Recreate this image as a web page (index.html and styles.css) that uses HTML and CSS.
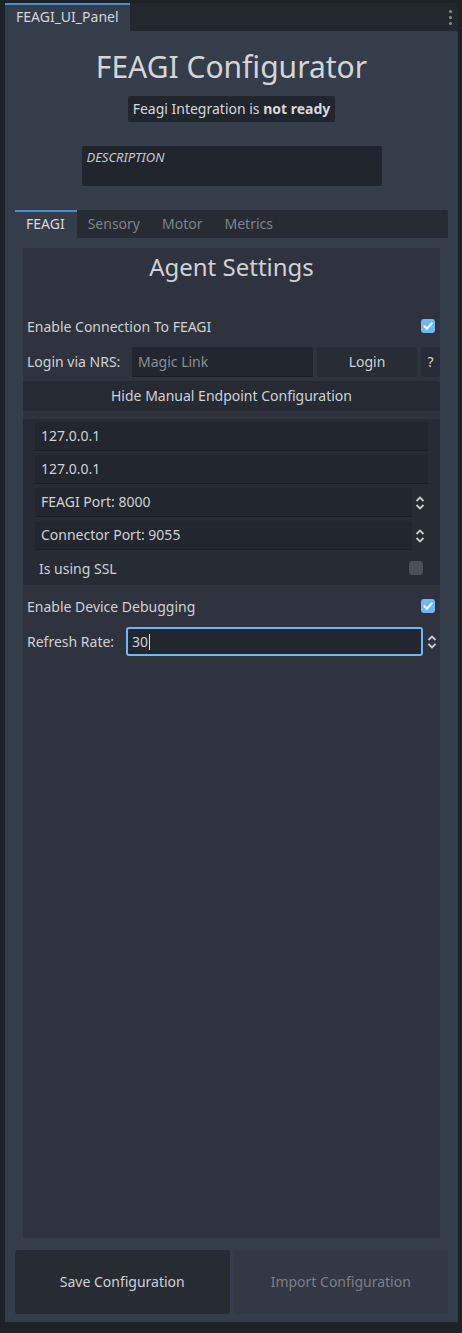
FILE: index.html
```html
<!DOCTYPE html>
<html>
<head>
<meta charset="utf-8">
<link rel="stylesheet" href="styles.css">
</head>
<body>
<div class="dock">
  <div class="dock-tabs">
    <div class="dock-tab">FEAGI_UI_Panel</div>
    <div class="dock-menu"><span></span><span></span><span></span></div>
  </div>
  <div class="dock-body">
    <h1 class="title">FEAGI Configurator</h1>
    <div class="status">Feagi Integration is <b>not ready</b></div>
    <div class="description">DESCRIPTION</div>
    <div class="tabs">
      <div class="tab active">FEAGI</div>
      <div class="tab">Sensory</div>
      <div class="tab">Motor</div>
      <div class="tab">Metrics</div>
    </div>
    <div class="tab-page">
      <div class="content">
        <div class="heading">Agent Settings</div>
        <div class="check-row enable-row">
          <span>Enable Connection To FEAGI</span>
          <svg class="check" width="14" height="14" viewBox="0 0 14 14"><rect width="14" height="14" rx="3" fill="#6fb7f8"/><polyline points="3.5,7.2 6,9.7 10.8,4.3" fill="none" stroke="#ffffff" stroke-width="2" stroke-linecap="round" stroke-linejoin="round"/></svg>
        </div>
        <div class="login-row">
          <span class="label">Login via NRS:</span>
          <div class="field placeholder login-field">Magic Link</div>
          <div class="btn login-btn">Login</div>
          <div class="btn help-btn">?</div>
        </div>
        <div class="btn wide-btn">Hide Manual Endpoint Configuration</div>
        <div class="endpoint">
          <div class="field">127.0.0.1</div>
          <div class="field">127.0.0.1</div>
          <div class="spin">
            <div class="field">FEAGI Port: 8000</div>
            <svg class="arrows" width="10" height="16" viewBox="0 0 10 16"><polyline points="1.5,6 5,2.5 8.5,6" fill="none" stroke="#c9ccd1" stroke-width="1.8"/><polyline points="1.5,10 5,13.5 8.5,10" fill="none" stroke="#c9ccd1" stroke-width="1.8"/></svg>
          </div>
          <div class="spin">
            <div class="field">Connector Port: 9055</div>
            <svg class="arrows" width="10" height="16" viewBox="0 0 10 16"><polyline points="1.5,6 5,2.5 8.5,6" fill="none" stroke="#c9ccd1" stroke-width="1.8"/><polyline points="1.5,10 5,13.5 8.5,10" fill="none" stroke="#c9ccd1" stroke-width="1.8"/></svg>
          </div>
          <div class="check-row ssl-row">
            <span>Is using SSL</span>
            <span class="check off"></span>
          </div>
        </div>
        <div class="check-row debug-row">
          <span>Enable Device Debugging</span>
          <svg class="check" width="14" height="14" viewBox="0 0 14 14"><rect width="14" height="14" rx="3" fill="#6fb7f8"/><polyline points="3.5,7.2 6,9.7 10.8,4.3" fill="none" stroke="#ffffff" stroke-width="2" stroke-linecap="round" stroke-linejoin="round"/></svg>
        </div>
        <div class="refresh-row">
          <span class="label">Refresh Rate:</span>
          <div class="focus-field">30<span class="caret"></span></div>
          <svg class="arrows" width="10" height="16" viewBox="0 0 10 16"><polyline points="1.5,6 5,2.5 8.5,6" fill="none" stroke="#c9ccd1" stroke-width="1.8"/><polyline points="1.5,10 5,13.5 8.5,10" fill="none" stroke="#c9ccd1" stroke-width="1.8"/></svg>
        </div>
      </div>
    </div>
    <div class="actions">
      <div class="btn action">Save Configuration</div>
      <div class="btn action disabled">Import Configuration</div>
    </div>
  </div>
</div>
</body>
</html>
```

FILE: styles.css
```css
html, body {
  margin: 0;
  padding: 0;
  background: #1d2128;
  height: 100%;
}
body {
  font-family: "Noto Sans", "DejaVu Sans", sans-serif;
  font-size: 14px;
  color: #cfd2d6;
}
.dock {
  margin: 3px 4px 0 5px;
  height: 1319px;
  display: flex;
  flex-direction: column;
}
.dock-tabs {
  height: 28px;
  background: #222730;
  display: flex;
  justify-content: space-between;
  border-top-right-radius: 3px;
}
.dock-tab {
  width: 114px;
  padding-left: 11px;
  box-sizing: content-box;
  background: #363d4a;
  border-top: 2px solid #4b8dd1;
  line-height: 24px;
  height: 24px;
  padding-bottom: 2px;
  color: #d4d6da;
}
.dock-menu {
  display: flex;
  flex-direction: column;
  gap: 3px;
  padding: 7px 6px 0 0;
}
.dock-menu span {
  width: 3px;
  height: 3px;
  border-radius: 50%;
  background: #8a8f97;
}
.dock-body {
  flex: 1;
  background: #363d4a;
  display: flex;
  flex-direction: column;
  padding: 0 10px 8px;
}
.title {
  margin: 16px 0 0;
  font-size: 30px;
  font-weight: 400;
  line-height: 40px;
  text-align: center;
  color: #d3d5d9;
}
.status {
  align-self: center;
  margin-top: 9px;
  height: 26px;
  line-height: 26px;
  padding: 0 5px;
  background: #21252d;
  border-radius: 2px;
  color: #d6d8dc;
}
.status b {
  font-weight: 700;
}
.description {
  align-self: center;
  margin-top: 24px;
  width: 295px;
  height: 37px;
  padding: 3px 0 0 5px;
  background: #21252d;
  border-radius: 2px;
  font-size: 13px;
  font-style: italic;
  line-height: 16px;
  color: #c9ccd1;
}
.tabs {
  margin-top: 24px;
  height: 28px;
  background: #262b34;
  display: flex;
  border-radius: 2px 2px 0 0;
}
.tab {
  padding: 2px 11px 2px 11px;
  line-height: 24px;
  color: #7f848c;
}
.tab.active {
  padding: 0 12px 2px 11px;
  border-top: 2px solid #4b8dd1;
  background: #363d4a;
  color: #d6d8dc;
}
.tab-page {
  flex: 1;
  display: flex;
  flex-direction: column;
  padding: 10px 8px 0;
}
.content {
  flex: 1;
  background: #2e333d;
  display: flex;
  flex-direction: column;
}
.heading {
  margin-top: 2px;
  font-size: 24px;
  line-height: 34px;
  text-align: center;
  color: #cfd2d6;
}
.check-row {
  display: flex;
  justify-content: space-between;
  align-items: center;
  height: 28px;
  padding: 0 5px 0 4px;
}
.enable-row {
  margin-top: 28px;
}
.debug-row {
  margin-top: 7px;
}
.check {
  display: block;
}
.check.off {
  width: 14px;
  height: 14px;
  border-radius: 3px;
  background: #4a4f58;
}
.login-row {
  margin-top: 7px;
  height: 30px;
  display: flex;
  gap: 4px;
  align-items: stretch;
}
.label {
  padding-left: 4px;
  line-height: 30px;
}
.login-row .label {
  width: 101px;
}
.field {
  background: #22262e;
  border-bottom: 1px solid #1a1d23;
  height: 28px;
  line-height: 28px;
  padding-left: 6px;
  color: #cfd2d6;
  border-radius: 2px 2px 0 0;
}
.login-field {
  width: 175px;
  height: 29px;
  line-height: 29px;
}
.placeholder {
  color: #8b8f96;
}
.btn {
  background: #272c35;
  border-radius: 3px;
  text-align: center;
  line-height: 30px;
  color: #cfd2d6;
}
.login-btn {
  width: 100px;
}
.help-btn {
  width: 19px;
}
.wide-btn {
  margin-top: 4px;
  height: 30px;
  background: #252a33;
}
.endpoint {
  margin-top: 8px;
  background: #272b33;
  padding: 3px 12px;
  display: flex;
  flex-direction: column;
  gap: 4px;
}
.spin {
  display: flex;
  align-items: center;
}
.spin .field {
  flex: 1;
}
.spin .arrows {
  width: 16px;
  display: block;
}
.ssl-row {
  padding: 0 5px 0 4px;
}
.refresh-row {
  margin-top: 7px;
  height: 29px;
  display: flex;
  align-items: center;
}
.refresh-row .label {
  width: 99px;
  line-height: 29px;
}
.focus-field {
  width: 289px;
  height: 25px;
  line-height: 25px;
  padding-left: 4px;
  border: 2px solid #6fb7f8;
  border-radius: 3px;
  background: #22262e;
  display: flex;
  align-items: center;
}
.caret {
  display: inline-block;
  width: 1px;
  height: 16px;
  background: #e0e2e5;
  margin-left: 1px;
}
.refresh-row .arrows {
  margin-left: 4px;
  display: block;
}
.actions {
  margin-top: 12px;
  height: 64px;
  display: grid;
  grid-template-columns: 1fr 1fr;
  gap: 4px;
}
.action {
  line-height: 64px;
  background: #262b34;
}
.action.disabled {
  background: #323844;
  color: #7b7f87;
}
```
